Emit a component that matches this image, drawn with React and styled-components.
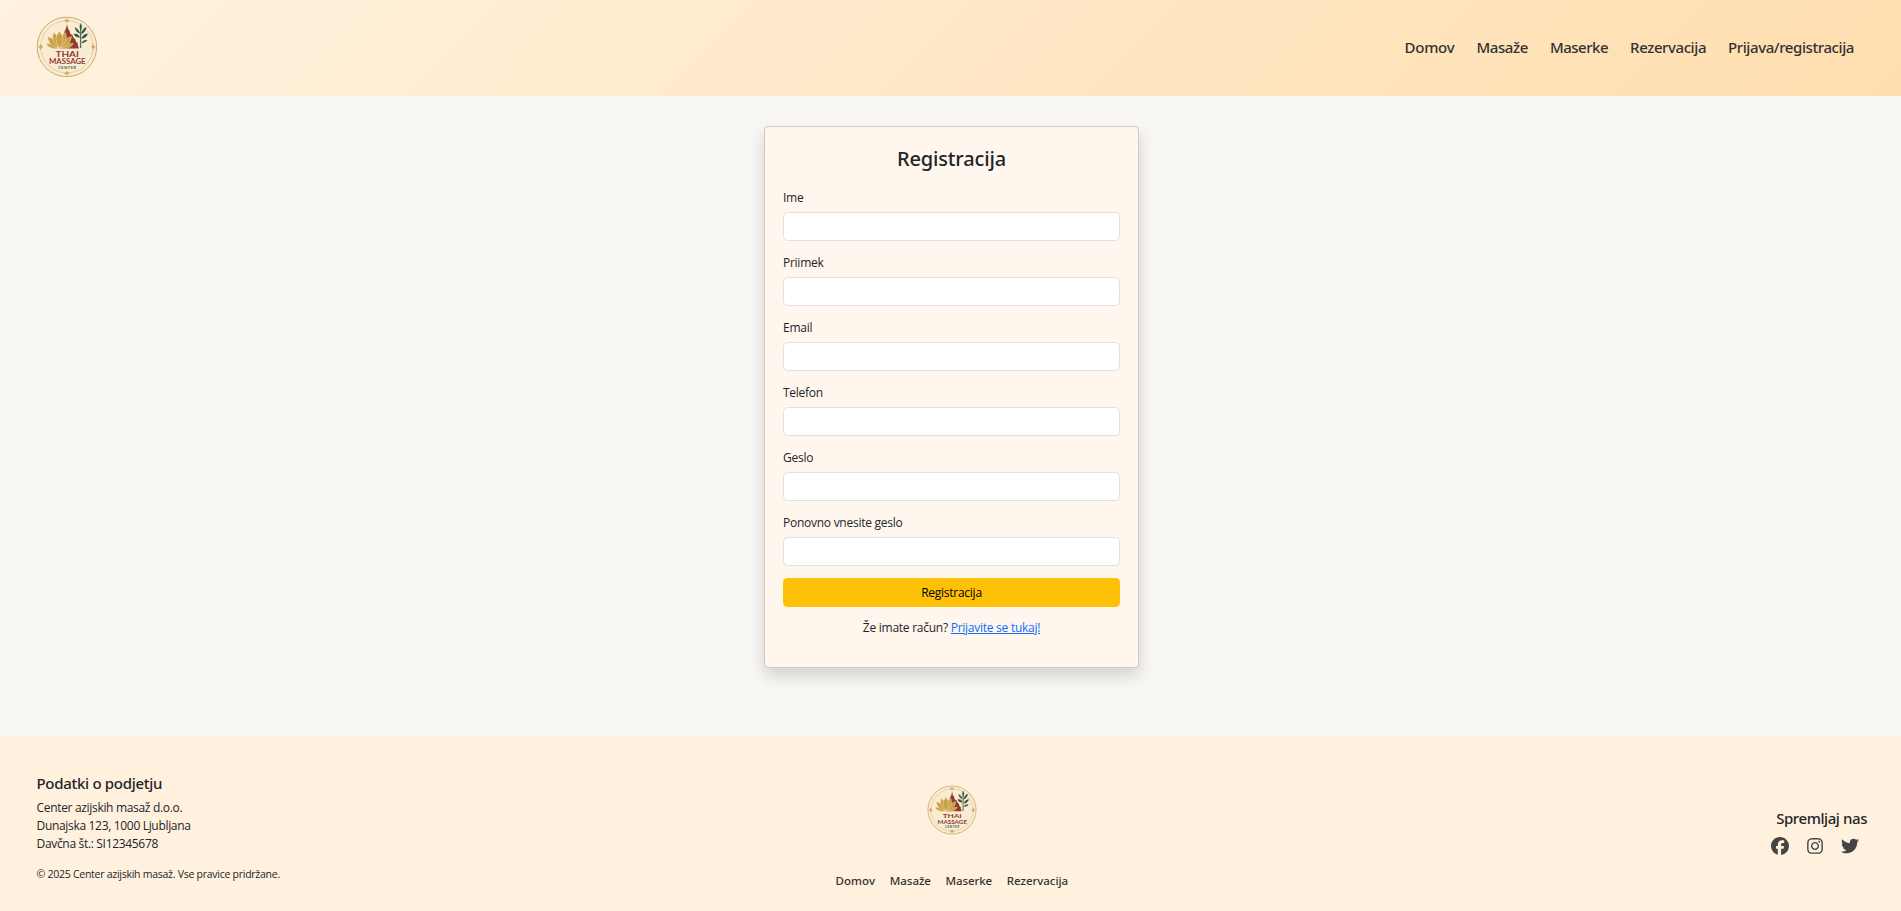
import React from "react";
import styled, { createGlobalStyle } from "styled-components";
import { FaFacebook, FaInstagram, FaTwitter } from "react-icons/fa6";

const GlobalStyle = createGlobalStyle`
  * { box-sizing: border-box; }
  body {
    margin: 0;
    background: #f8f7f3;
    color: #212529;
    font: 400 12px/18px "Open Sans", "Noto Sans", sans-serif;
    letter-spacing: -0.26px;
  }
`;

const Page = styled.div`
  display: flex;
  flex-direction: column;
  height: 911px;
  overflow: hidden;
`;

const Header = styled.header`
  display: flex;
  align-items: center;
  justify-content: space-between;
  height: 96px;
  padding: 0 47px 2px 35.5px;
  background: linear-gradient(135deg, #fff2e0, #ffdeae);
`;

const Nav = styled.nav`
  display: flex;
  gap: ${(p) => (p.$small ? "14.7px" : "22px")};
`;

const NavLink = styled.a`
  color: #333;
  font-family: "Noto Sans", sans-serif;
  font-weight: 500;
  font-size: ${(p) => (p.$small ? "11.5px" : "15px")};
  line-height: ${(p) => (p.$small ? "18px" : "24px")};
  letter-spacing: ${(p) => p.$track || 0}px;
  text-decoration: none;
`;

const Main = styled.main`
  flex: 1;
  display: flex;
  justify-content: center;
  align-items: flex-start;
  padding: 30px 0 0 2px;
`;

const Card = styled.form`
  width: 375px;
  height: 541.5px;
  padding: 18px;
  border: 1px solid #d4c9c0;
  border-radius: 4px;
  background: #fff6ed;
  box-shadow: 0 8px 16px rgba(0, 0, 0, 0.15);
`;

const Title = styled.h1`
  margin: 0;
  padding-top: 1px;
  height: 44px;
  font: 500 20px/26px "Noto Sans", sans-serif;
  letter-spacing: -0.15px;
  text-align: center;
`;

const Field = styled.label`
  display: block;
  margin-bottom: ${(p) => (p.$last ? "12px" : "13px")};
`;

const Input = styled.input`
  display: block;
  width: 100%;
  height: 29px;
  margin-top: 5px;
  padding: 4px 9px;
  border: 1px solid #dee2e6;
  border-radius: 4.5px;
  background: #fff;
  font: inherit;
`;

const Submit = styled.button`
  display: block;
  width: 100%;
  height: 29px;
  padding: 0;
  border: 0;
  border-radius: 4.5px;
  background: #ffc107;
  color: #000;
  font: inherit;
  letter-spacing: inherit;
`;

const LoginHint = styled.p`
  margin: 12px 0 0;
  text-align: center;
`;

const LoginLink = styled.a`
  color: #0d6efd;
  text-decoration: underline;
`;

const Footer = styled.footer`
  display: grid;
  grid-template-columns: 1fr auto 1fr;
  height: 174px;
  padding: 0 34px 0 36.5px;
  background: #fff1dd;
`;

const Company = styled.section`
  padding-top: 36px;
`;

const FooterTitle = styled.h2`
  margin: 0 0 ${(p) => p.$gap}px;
  font: 500 15px/20px "Noto Sans", sans-serif;
  letter-spacing: ${(p) => p.$track}px;
`;

const Line = styled.p`
  margin: 0;
  letter-spacing: -0.32px;
`;

const Copyright = styled.p`
  margin: 12px 0 0;
  font-size: 10.5px;
  letter-spacing: -0.26px;
`;

const FooterCenter = styled.section`
  display: flex;
  flex-direction: column;
  align-items: center;
  gap: 37px;
  padding-top: 48px;
`;

const Social = styled.section`
  display: flex;
  flex-direction: column;
  align-items: flex-end;
  padding-top: 71px;
`;

const SocialIcons = styled.div`
  display: flex;
  align-items: center;
  gap: 17px;
  margin-right: 8px;
  color: #444;

  a { display: flex; color: inherit; }
  svg { width: auto; height: 18px; }
`;

const LogoSvg = styled.svg`
  display: block;
  width: ${(p) => p.$size}px;
  height: ${(p) => p.$size}px;
`;

const petals = [
  "M46 99Q56 118 84 115Q69 99 46 99Z",
  "M129 99Q119 118 90 115Q105 99 129 99Z",
  "M51 78Q52 104 82 114Q78 86 51 78Z",
  "M123 78Q122 104 92 114Q96 86 123 78Z",
  "M69 66Q59 92 84 113Q90 78 69 66Z",
  "M105 66Q115 92 90 113Q84 78 105 66Z",
  "M87 62Q66 84 87 114Q108 84 87 62Z",
];

const leaves = [
  "M151 37Q158 49 151 60Q145 49 151 37Z",
  "M133 49Q146 55 150 70Q135 64 133 49Z",
  "M169 49Q168 64 152 71Q155 54 169 49Z",
  "M130 70Q145 67 149 81Q135 83 130 70Z",
  "M173 69Q169 84 153 85Q158 70 173 69Z",
  "M172 89Q164 100 153 97Q160 86 172 89Z",
];

function Logo({ size }) {
  return (
    <LogoSvg $size={size} viewBox="16 16 187 187" role="img">
      <circle cx="109.5" cy="109.5" r="91" fill="#f9ecd3" />
      <g fill="none" stroke="#cfa863">
        <circle cx="109.5" cy="109.5" r="90" strokeWidth="3" />
        <circle cx="109.5" cy="109.5" r="79" strokeWidth="2" stroke="#dcc08a" />
      </g>
      <g fill="#cfa863">
        {[0, 90, 180, 270].map((a) => (
          <path
            key={a}
            transform={`rotate(${a} 109.5 109.5)`}
            d="M109.5 21L112 27L120 30L112 33L109.5 39L107 33L99 30L107 27Z"
          />
        ))}
      </g>
      <path
        fill="#8f3c2b"
        d="M110 40L112.5 53L118 62L120 70L127 74L129 81L135 86L137 94L142 98L143 107L145 109V114H88L101 66L107 53Z"
      />
      <g fill="#c9a045" stroke="#f6e5c0" strokeWidth="1.5">
        {petals.map((d) => <path key={d} d={d} />)}
      </g>
      <path d="M151 45V113" stroke="#55764f" strokeWidth="4" fill="none" />
      <g fill="#345c41">
        {leaves.map((d) => <path key={d} d={d} />)}
      </g>
      <g fontFamily="Lato, sans-serif" fontWeight="700" fill="#8f3c33" letterSpacing="0">
        <text x="75" y="140" fontSize="24" textLength="71" lengthAdjust="spacingAndGlyphs">THAI</text>
        <text x="55" y="161" fontSize="22.5" textLength="111" lengthAdjust="spacingAndGlyphs">MASSAGE</text>
        <text x="83" y="177.5" fontSize="11.5" fontWeight="900" textLength="54" fill="#456a50">CENTER</text>
      </g>
    </LogoSvg>
  );
}

const headerLinks = [
  ["Domov", -0.25],
  ["Masaže", -0.4],
  ["Maserke", -0.5],
  ["Rezervacija", -0.42],
  ["Prijava/registracija", -0.41],
];
const footerLinks = [["Domov", 0.1], ["Masaže", -0.05], ["Maserke", -0.1], ["Rezervacija", -0.05]];
const fields = ["Ime", "Priimek", "Email", "Telefon", "Geslo", "Ponovno vnesite geslo"];

export default function App() {
  return (
    <Page>
      <GlobalStyle />
      <Header>
        <Logo size={61.8} />
        <Nav>
          {headerLinks.map(([label, track]) => (
            <NavLink key={label} $track={track}>{label}</NavLink>
          ))}
        </Nav>
      </Header>
      <Main>
        <Card>
          <Title>Registracija</Title>
          {fields.map((label, i) => (
            <Field key={label} $last={i === fields.length - 1}>
              {label}
              <Input type={i > 3 ? "password" : "text"} />
            </Field>
          ))}
          <Submit type="button">Registracija</Submit>
          <LoginHint>
            Že imate račun? <LoginLink>Prijavite se tukaj!</LoginLink>
          </LoginHint>
        </Card>
      </Main>
      <Footer>
        <Company>
          <FooterTitle $track={-0.3} $gap={6}>Podatki o podjetju</FooterTitle>
          <Line>Center azijskih masaž d.o.o.</Line>
          <Line>Dunajska 123, 1000 Ljubljana</Line>
          <Line>Davčna št.: SI12345678</Line>
          <Copyright>© 2025 Center azijskih masaž. Vse pravice pridržane.</Copyright>
        </Company>
        <FooterCenter>
          <Logo size={50} />
          <Nav $small>
            {footerLinks.map(([label, track]) => (
              <NavLink key={label} $small $track={track}>{label}</NavLink>
            ))}
          </Nav>
        </FooterCenter>
        <Social>
          <FooterTitle $track={-0.42} $gap={9}>Spremljaj nas</FooterTitle>
          <SocialIcons>
            <a><FaFacebook /></a>
            <a><FaInstagram /></a>
            <a><FaTwitter /></a>
          </SocialIcons>
        </Social>
      </Footer>
    </Page>
  );
}
